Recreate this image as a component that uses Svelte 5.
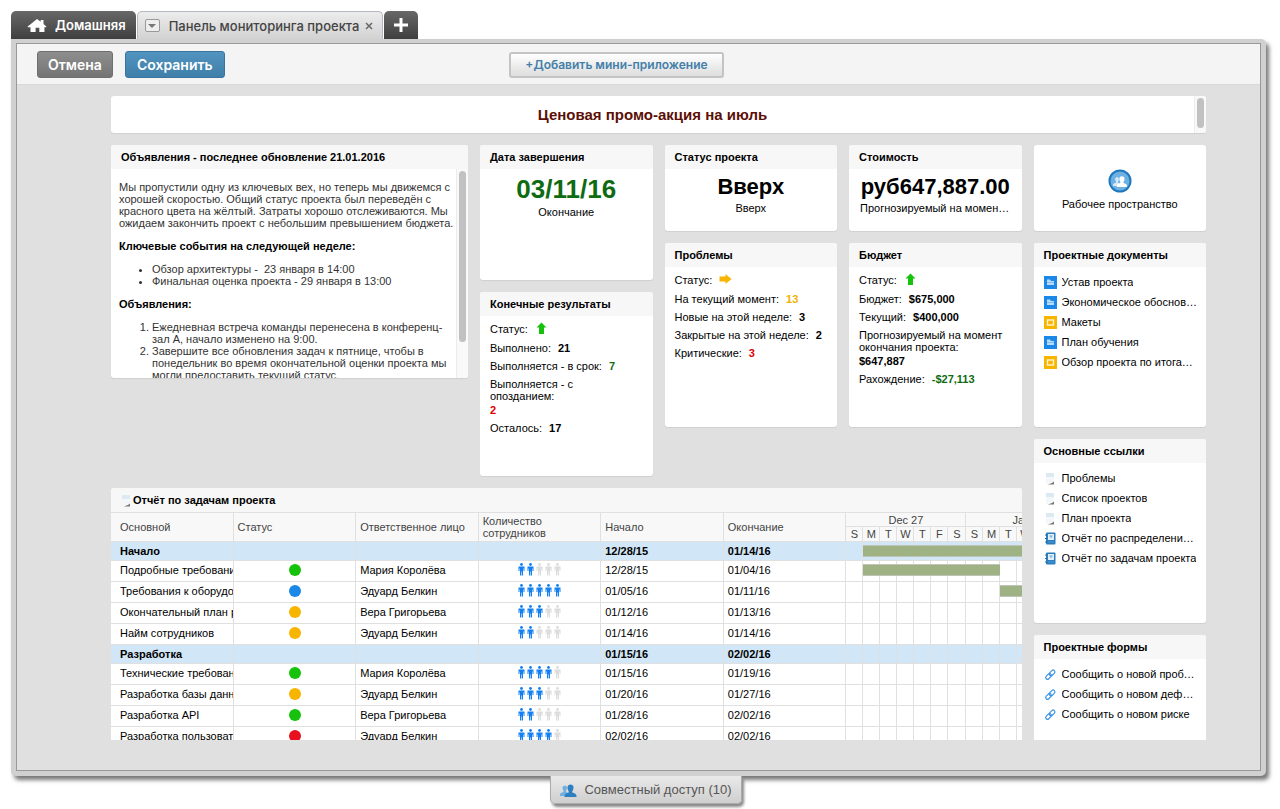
<script lang="ts">
	type Stat = { label: string; value?: string; arrow?: 'up' | 'right'; tone?: string };
	type Item = { icon: string; text: string };

	const results: Stat[] = [
		{ label: 'Статус:', arrow: 'up' },
		{ label: 'Выполнено:', value: '21' },
		{ label: 'Выполняется - в срок:', value: '7', tone: 'good' },
		{ label: 'Выполняется - с опозданием:', value: '2', tone: 'bad' },
		{ label: 'Осталось:', value: '17' }
	];

	const issues: Stat[] = [
		{ label: 'Статус:', arrow: 'right' },
		{ label: 'На текущий момент:', value: '13', tone: 'warn' },
		{ label: 'Новые на этой неделе:', value: '3' },
		{ label: 'Закрытые на этой неделе:', value: '2' },
		{ label: 'Критические:', value: '3', tone: 'bad' }
	];

	const budget: Stat[] = [
		{ label: 'Статус:', arrow: 'up' },
		{ label: 'Бюджет:', value: '$675,000' },
		{ label: 'Текущий:', value: '$400,000' },
		{ label: 'Прогнозируемый на момент окончания проекта:', value: '$647,887' },
		{ label: 'Рахождение:', value: '-$27,113', tone: 'good' }
	];

	const documents: Item[] = [
		{ icon: 'folder', text: 'Устав проекта' },
		{ icon: 'folder', text: 'Экономическое обоснование' },
		{ icon: 'slides', text: 'Макеты' },
		{ icon: 'folder', text: 'План обучения' },
		{ icon: 'slides', text: 'Обзор проекта по итогам года' }
	];

	const links: Item[] = [
		{ icon: 'sheet', text: 'Проблемы' },
		{ icon: 'sheet', text: 'Список проектов' },
		{ icon: 'sheet', text: 'План проекта' },
		{ icon: 'report', text: 'Отчёт по распределению ресурсов' },
		{ icon: 'report', text: 'Отчёт по задачам проекта' }
	];

	const forms: Item[] = [
		{ icon: 'chain', text: 'Сообщить о новой проблеме' },
		{ icon: 'chain', text: 'Сообщить о новом дефекте' },
		{ icon: 'chain', text: 'Сообщить о новом риске' }
	];

	const columns = ['Основной', 'Статус', 'Ответственное лицо', 'Количество сотрудников', 'Начало', 'Окончание'];
	const weeks = ['Dec 27', 'Jan 3'];
	const days = [...'SMTWTFSSMTWTFS'];

	// bar: first and last day column covered in the chart
	const tasks = [
		{ name: 'Начало', group: true, start: '12/28/15', end: '01/14/16', bar: [1, 13] },
		{ name: 'Подробные требования', status: 'green', owner: 'Мария Королёва', staff: 2, start: '12/28/15', end: '01/04/16', bar: [1, 8] },
		{ name: 'Требования к оборудованию', status: 'blue', owner: 'Эдуард Белкин', staff: 5, start: '01/05/16', end: '01/11/16', bar: [9, 13] },
		{ name: 'Окончательный план ресурсов', status: 'yellow', owner: 'Вера Григорьева', staff: 3, start: '01/12/16', end: '01/13/16' },
		{ name: 'Найм сотрудников', status: 'yellow', owner: 'Эдуард Белкин', staff: 2, start: '01/14/16', end: '01/14/16' },
		{ name: 'Разработка', group: true, start: '01/15/16', end: '02/02/16' },
		{ name: 'Технические требования', status: 'green', owner: 'Мария Королёва', staff: 4, start: '01/15/16', end: '01/19/16' },
		{ name: 'Разработка базы данных', status: 'yellow', owner: 'Эдуард Белкин', staff: 3, start: '01/20/16', end: '01/27/16' },
		{ name: 'Разработка API', status: 'green', owner: 'Вера Григорьева', staff: 2, start: '01/28/16', end: '02/02/16' },
		{ name: 'Разработка пользовательского', status: 'red', owner: 'Эдуард Белкин', staff: 4, start: '02/02/16', end: '02/02/16' }
	];

	function inBar(bar: number[] | undefined, day: number): boolean {
		return !!bar && day >= bar[0] && day <= bar[1];
	}
</script>

{#snippet icon(name: string)}
	{#if name === 'folder'}
		<svg width="13" height="13" viewBox="0 0 13 13" aria-hidden="true">
			<rect width="13" height="13" fill="#1b87e6" />
			<path d="M3 3.500h3l1 1.500h3v4H3z" fill="#b9dcfb" />
			<path d="M3 6.500h7" stroke="#5aaaf0" stroke-width=".6" />
		</svg>
	{:else if name === 'slides'}
		<svg width="13" height="13" viewBox="0 0 13 13" aria-hidden="true">
			<rect width="13" height="13" fill="#f7b500" />
			<rect x="3.500" y="4" width="6" height="5" fill="none" stroke="#fff4cf" stroke-width="1.400" />
		</svg>
	{:else if name === 'sheet'}
		<svg width="13" height="13" viewBox="0 0 13 13" aria-hidden="true">
			<path d="M2 1h8v8.500L3 12H2z" fill="#f4f7f9" />
			<path d="M2 1h8v4H2z" fill="#dbe9f0" />
			<path d="M3.500 12.500H10V9.500C8.500 11 6 11.800 3.500 12.500z" fill="#777" />
		</svg>
	{:else if name === 'report'}
		<svg width="13" height="13" viewBox="0 0 13 13" aria-hidden="true">
			<rect x="2" y=".5" width="9.500" height="12" rx="1" fill="#2b7fc0" />
			<rect x="4" y="2" width="6" height="6" fill="#e3f0fa" />
			<path d="M5.500 4h3M7 4v2" stroke="#6fa9d6" />
			<path d="M1 3h2M1 6.500h2M1 10h2" stroke="#2b6ea5" />
			<path d="M4 10h6" stroke="#4c9bd3" />
		</svg>
	{:else}
		<svg width="13" height="13" viewBox="0 0 13 13" aria-hidden="true">
			<g fill="none" stroke="#3d95e6" stroke-width="1.200" transform="rotate(-45 6.500 6.500)">
				<rect x="0.500" y="4.700" width="6.500" height="3.600" rx="1.800" />
				<rect x="5.500" y="4.700" width="6.500" height="3.600" rx="1.800" />
			</g>
		</svg>
	{/if}
{/snippet}

{#snippet arrow(dir: string)}
	{#if dir === 'up'}
		<svg width="13" height="13" viewBox="0 0 13 13" role="img" aria-label="Вверх">
			<path d="M6.500.5L11.500 5.500H9V12H4V5.500H1.500z" fill="#16c20b" />
		</svg>
	{:else}
		<svg width="13" height="13" viewBox="0 0 13 13" role="img" aria-label="Без изменений">
			<path d="M.5 3.500h6V1l6 5-6 5V8.500h-6z" fill="#f7b500" />
		</svg>
	{/if}
{/snippet}

{#snippet people(front: string, back: string)}
	<path d="M2.500 4.500C2.500 2 7 2 7 4.500 7 6 6.500 7 6 7.500V9l2 1v3H0v-1.500C0 10 1.500 9.500 3.500 9V7.500C3 7 2.500 6 2.500 4.500z" fill={back} />
	<path d="M7.500 4c0-3.500 6-3.500 6 0 0 2-.5 3.500-1.200 4.200V9.500c2.200.8 4.200 1.500 4.200 3.500v1h-12v-1c0-2 2-2.700 4.200-3.500V8.200C8 7.500 7.500 6 7.500 4z" fill={front} />
{/snippet}

{#snippet stats(rows: Stat[])}
	<dl class="stats">
		{#each rows as row}
			<div class="stat" class:status={row.arrow}>
				<dt>{row.label}</dt>
				<dd class={row.tone}>
					{#if row.arrow}{@render arrow(row.arrow)}{:else}{row.value}{/if}
				</dd>
			</div>
		{/each}
	</dl>
{/snippet}

{#snippet shortcuts(items: Item[])}
	<ul class="shortcuts">
		{#each items as item}
			<li>
				{@render icon(item.icon)}
				<a href="#open">{item.text}</a>
			</li>
		{/each}
	</ul>
{/snippet}

<div class="page">
	<nav class="tabs">
		<a class="tab home" href="#home">
			<svg width="20" height="13" viewBox="0 0 20 14" aria-hidden="true">
				<path d="M10 0l4 3V1h3v4.500L20 8v1h-2v5h-5.500V9.500h-4V14H3V9H0V8z" fill="#fff" />
			</svg>
			Домашняя
		</a>
		<div class="tab active">
			<button class="menu" aria-label="Меню вкладки"></button>
			<span>Панель мониторинга проекта</span>
			<button class="close" aria-label="Закрыть">
				<svg width="8" height="8" viewBox="0 0 8 8"><path d="M1 1l6 6M7 1L1 7" stroke="#666" stroke-width="1.500" /></svg>
			</button>
		</div>
		<button class="tab add" aria-label="Новая вкладка">
			<svg width="14" height="14" viewBox="0 0 14 14"><path d="M7 0v14M0 7h14" stroke="#fff" stroke-width="3" /></svg>
		</button>
	</nav>

	<div class="frame">
		<div class="window">
			<div class="toolbar">
				<div class="actions">
					<button class="btn cancel">Отмена</button>
					<button class="btn save">Сохранить</button>
				</div>
				<button class="btn widget">+Добавить мини-приложение</button>
			</div>

			<main class="board">
				<section class="card banner">
					<h1>Ценовая промо-акция на июль</h1>
					<div class="track"><div class="thumb"></div></div>
				</section>

				<section class="card news">
					<h2>Объявления - последнее обновление 21.01.2016</h2>
					<div class="scroller">
						<div class="article">
							<p>Мы пропустили одну из ключевых вех, но теперь мы движемся с хорошей скоростью. Общий статус проекта был переведён с красного цвета на жёлтый. Затраты хорошо отслеживаются. Мы ожидаем закончить проект с небольшим превышением бюджета.</p>
							<h3>Ключевые события на следующей неделе:</h3>
							<ul>
								<li>Обзор архитектуры -&nbsp; 23 января в 14:00</li>
								<li>Финальная оценка проекта - 29 января в 13:00</li>
							</ul>
							<h3>Объявления:</h3>
							<ol>
								<li>Ежедневная встреча команды перенесена в конференц-зал A, начало изменено на 9:00.</li>
								<li>Завершите все обновления задач к пятнице, чтобы в понедельник во время окончательной оценки проекта мы могли предоставить текущий статус.</li>
							</ol>
						</div>
						<div class="track"><div class="thumb"></div></div>
					</div>
				</section>

				<section class="card due">
					<h2>Дата завершения</h2>
					<div class="metric date">
						<strong>03/11/16</strong>
						<span>Окончание</span>
					</div>
				</section>

				<section class="card state">
					<h2>Статус проекта</h2>
					<div class="metric">
						<strong>Вверх</strong>
						<span>Вверх</span>
					</div>
				</section>

				<section class="card cost">
					<h2>Стоимость</h2>
					<div class="metric">
						<strong>руб647,887.00</strong>
						<span>Прогнозируемый на момент окончания</span>
					</div>
				</section>

				<a class="card workspace" href="#workspace">
					<svg width="24" height="24" viewBox="0 0 24 24" aria-hidden="true">
						<circle cx="12" cy="12" r="10.500" fill="#6db0e2" stroke="#1d78bd" stroke-width="2" />
						<g transform="translate(5 6) scale(.85)">{@render people('#fff', '#d3e8f8')}</g>
					</svg>
					Рабочее пространство
				</a>

				<section class="card results">
					<h2>Конечные результаты</h2>
					{@render stats(results)}
				</section>

				<section class="card issues">
					<h2>Проблемы</h2>
					{@render stats(issues)}
				</section>

				<section class="card budget">
					<h2>Бюджет</h2>
					{@render stats(budget)}
				</section>

				<section class="card documents">
					<h2>Проектные документы</h2>
					{@render shortcuts(documents)}
				</section>

				<section class="card links">
					<h2>Основные ссылки</h2>
					{@render shortcuts(links)}
				</section>

				<section class="card forms">
					<h2>Проектные формы</h2>
					{@render shortcuts(forms)}
				</section>

				<section class="card report">
					<h2>{@render icon('sheet')}Отчёт по задачам проекта</h2>
					<table>
						<colgroup>
							{#each columns as _}<col />{/each}
							{#each days as _, d}<col class={d % 7 === 6 ? 'day last' : 'day'} />{/each}
						</colgroup>
						<thead>
							<tr>
								{#each columns as column}<th rowspan="2">{column}</th>{/each}
								{#each weeks as week}<th class="week" colspan="7">{week}</th>{/each}
							</tr>
							<tr>
								{#each days as day}<th class="day">{day}</th>{/each}
							</tr>
						</thead>
						<tbody>
							{#each tasks as task}
								<tr class:group={task.group}>
									<td>{task.name}</td>
									<td class="center">
										{#if task.status}<span class="dot {task.status}"></span>{/if}
									</td>
									<td>{task.owner ?? ''}</td>
									<td class="center">
										{#if task.staff}
											<svg width="44" height="13" viewBox="0 0 44 13" role="img" aria-label="{task.staff} из 5">
												{#each [0, 1, 2, 3, 4] as n}
													<g transform="translate({n * 9} 0)" fill={n < task.staff ? '#1280f0' : '#dcdcdc'}>
														<circle cx="3.500" cy="1.500" r="1.400" />
														<path d="M.5 3.500h6V8H5.500V5.500H5V12.500H3.800V8.500H3.200V12.500H2V5.500H1.500V8H.5z" />
													</g>
												{/each}
											</svg>
										{/if}
									</td>
									<td>{task.start}</td>
									<td>{task.end}</td>
									{#each days as _, d}<td class="day" class:filled={inBar(task.bar, d)}></td>{/each}
								</tr>
							{/each}
						</tbody>
					</table>
				</section>
			</main>
		</div>
	</div>

	<div class="footer">
		<button class="share">
			<svg width="17" height="14" viewBox="0 0 17 14" aria-hidden="true">{@render people('#2d7fc1', '#6fb0e0')}</svg>
			Совместный доступ (10)
		</button>
	</div>
</div>

<style>
	:global(body) {
		background: #fff;
		font-family: 'Liberation Sans', Arial, sans-serif;
		font-size: 11px;
		line-height: 12px;
		color: #000;
	}

	.page {
		padding: 11px 14px 0 11px;
	}

	h1, h2, h3, p, ul, ol, dl, dd {
		margin: 0;
		padding: 0;
	}

	button {
		font: inherit;
		cursor: pointer;
	}

	a {
		color: inherit;
		text-decoration: none;
	}

	svg {
		flex: none;
		display: block;
	}

	/* Tabs */
	.tabs {
		display: flex;
		align-items: flex-end;
		gap: 1px;
		font-family: Inter, sans-serif;
		font-size: 13px;
		font-weight: 500;
	}

	.tab {
		box-sizing: border-box;
		display: flex;
		align-items: center;
		height: 28px;
		border: 0;
		border-radius: 5px 5px 0 0;
		background: linear-gradient(#686868, #3f3f3f);
		color: #fff;
	}

	.home {
		gap: 8px;
		padding: 0 10px 0 16px;
		font-weight: 600;
	}

	.active {
		gap: 6px;
		padding: 0 9px 0 7px;
		background: linear-gradient(#ececec, #d2d2d2);
		border: 1px solid #b4b8c0;
		border-bottom: 0;
		color: #444;
	}

	.active span {
		padding-left: 3px;
	}

	.menu {
		display: flex;
		align-items: center;
		justify-content: center;
		width: 15px;
		height: 13px;
		padding: 0;
		border: 1px solid #999;
		border-radius: 2px;
		background: #eee;
	}

	.menu::before {
		content: '';
		border: 4px solid transparent;
		border-top-color: #777;
		border-bottom: 0;
	}

	.close {
		padding: 0;
		border: 0;
		background: none;
	}

	.add {
		padding: 0 10px;
	}

	/* Window */
	.frame {
		padding: 4px 5px 5px;
		background: #d0d0d0;
		border-radius: 0 5px 5px 5px;
		box-shadow: 3px 4px 4px #777;
	}

	.window {
		border: 1px solid #999;
		background: #e0e0e0;
	}

	.toolbar {
		display: grid;
		grid-template-columns: 1fr auto 1fr;
		align-items: center;
		padding: 7px 64px 6px 20px;
		background: #f4f4f4;
		border-bottom: 1px solid #d8d8d8;
		font-family: Inter, sans-serif;
	}

	.actions {
		display: flex;
		gap: 12px;
	}

	.btn {
		box-sizing: border-box;
		height: 27px;
		padding: 0 11px;
		border: 1px solid #6f6f6f;
		border-radius: 3px;
		color: #fff;
		font-size: 14px;
		font-weight: 600;
		white-space: nowrap;
	}

	.cancel {
		padding: 0 10px;
		background: linear-gradient(#8e8e8e, #747474);
	}

	.save {
		border-color: #3a749e;
		background: linear-gradient(#5194bf, #3f7faa);
	}

	.widget {
		height: 26px;
		padding: 0 14px;
		border: 2px solid #c4c4c4;
		background: linear-gradient(#fff, #ddd);
		color: #447fa9;
		font-size: 12px;
	}

	/* Dashboard grid */
	.board {
		display: grid;
		grid-template-columns: repeat(6, minmax(0, 1fr));
		grid-template-rows: repeat(13, 37px) 7px;
		gap: 12px;
		padding: 11px 54px 30px 94px;
	}

	.card {
		min-width: 0;
		background: #fff;
		border-radius: 3px;
		box-shadow: 0 1px 1px #d0d0d0;
		overflow: hidden;
	}

	.banner { grid-area: 1 / 1 / 2 / 7; }
	.news { grid-area: 2 / 1 / 7 / 3; }
	.due { grid-area: 2 / 3 / 5 / 4; }
	.state { grid-area: 2 / 4 / 4 / 5; }
	.cost { grid-area: 2 / 5 / 4 / 6; }
	.workspace { grid-area: 2 / 6 / 4 / 7; }
	.results { grid-area: 5 / 3 / 9 / 4; }
	.issues { grid-area: 4 / 4 / 8 / 5; }
	.budget { grid-area: 4 / 5 / 8 / 6; }
	.documents { grid-area: 4 / 6 / 8 / 7; }
	.links { grid-area: 8 / 6 / 12 / 7; }
	.forms { grid-area: 12 / 6 / 15 / 7; }
	.report { grid-area: 9 / 1 / 15 / 6; }

	.forms,
	.report {
		border-radius: 3px 3px 0 0;
		box-shadow: none;
	}

	h2 {
		display: flex;
		align-items: center;
		height: 24px;
		padding: 0 10px;
		background: #f7f7f7;
		font-size: 11px;
	}

	.report h2 {
		padding: 0 9px;
	}

	.banner {
		display: flex;
	}

	h1 {
		flex: 1;
		color: #5c0f06;
		font-size: 15px;
		line-height: 38px;
		text-align: center;
	}

	.track {
		flex: none;
		padding: 2px;
		background: #f9f9f9;
		border-left: 1px solid #ececec;
	}

	.thumb {
		width: 7px;
		height: 30px;
		border-radius: 4px;
		background: #c1c1c1;
	}

	.news {
		display: flex;
		flex-direction: column;
	}

	.news h2 {
		flex: none;
	}

	.scroller {
		display: flex;
		flex: 1;
		min-height: 0;
	}

	.scroller .thumb {
		height: 171px;
	}

	.article {
		flex: 1;
		display: flex;
		flex-direction: column;
		gap: 11px;
		padding: 12px 0 0 8px;
		color: #333;
	}

	.article h3 {
		color: #000;
		font-size: 11px;
	}

	.article ul,
	.article ol {
		padding: 0 8px 0 33px;
	}

	/* Metrics */
	.metric {
		display: flex;
		flex-direction: column;
		gap: 4px;
		padding: 7px 11px;
		text-align: center;
	}

	.metric strong {
		font-size: 22px;
		line-height: 22px;
		white-space: nowrap;
	}

	.metric span {
		overflow: hidden;
		text-overflow: ellipsis;
		white-space: nowrap;
	}

	.date strong {
		color: #0f6b12;
		font-size: 26px;
		line-height: 26px;
	}

	.workspace {
		display: flex;
		flex-direction: column;
		align-items: center;
		justify-content: center;
		gap: 5px;
		padding-top: 2px;
	}

	.stats {
		display: flex;
		flex-direction: column;
		gap: 6px;
		padding: 6px 8px 6px 10px;
	}

	.stat {
		display: flex;
		flex-wrap: wrap;
		gap: 2px 7px;
	}

	.status {
		line-height: 14px;
	}

	.stat dt {
		max-width: 94%;
	}

	.stat dd {
		font-weight: bold;
	}

	.good { color: #0f6b12; }
	.warn { color: #f2b100; }
	.bad { color: #e00000; }

	.shortcuts {
		padding: 5px 8px 5px 10px;
		list-style: none;
	}

	.shortcuts li {
		display: flex;
		align-items: center;
		gap: 5px;
		height: 20px;
	}

	.shortcuts a {
		overflow: hidden;
		text-overflow: ellipsis;
		white-space: nowrap;
	}

	/* Task report */
	table {
		width: calc(100% + 65px);
		table-layout: fixed;
		border-collapse: separate;
		border-spacing: 0;
	}

	col.day {
		width: 17px;
	}

	col.last {
		width: 18px;
	}

	th,
	td {
		box-sizing: border-box;
		padding: 0 3px 0 4px;
		border-right: 1px solid #e0e0e0;
		border-bottom: 1px solid #e0e0e0;
		overflow: hidden;
		text-align: left;
	}

	th {
		height: 15px;
		border-top: 1px solid #e0e0e0;
		background: #f8f8f8;
		color: #444;
		font-weight: normal;
	}

	th:first-child:not(.day),
	td:first-child {
		padding-left: 9px;
	}

	th.week,
	th.day {
		padding: 0;
		text-align: center;
	}

	th.day {
		border-top: 0;
	}

	td {
		height: 21px;
		padding-bottom: 3px;
		white-space: nowrap;
	}

	td.center > * {
		margin: 0 auto;
	}

	td.day {
		position: relative;
		padding: 0;
		overflow: visible;
	}

	.filled::after {
		content: '';
		position: absolute;
		inset: 3px -1px auto 0;
		height: 10px;
		background: #9fb284;
		border: solid #bfc4b8;
		border-width: 1px 0;
	}

	.group td {
		height: 19px;
		padding-bottom: 0;
		background: #d1e6f6;
		font-weight: bold;
	}

	.dot {
		display: block;
		width: 12px;
		height: 12px;
		border-radius: 50%;
	}

	.green { background: #16c20b; }
	.blue { background: #1b87e6; }
	.yellow { background: #f7b500; }
	.red { background: #e8101e; }

	/* Share tab */
	.footer {
		display: flex;
		justify-content: center;
		padding: 0 0 5px 15px;
	}

	.share {
		position: relative;
		display: flex;
		align-items: center;
		gap: 7px;
		height: 28px;
		padding: 0 9px;
		border: 1px solid #aaa;
		border-top: 0;
		border-radius: 0 0 5px 5px;
		background: linear-gradient(#e9e9e9, #cfcfcf);
		box-shadow: 2px 3px 3px #888;
		color: #555;
		font-size: 13px;
	}
</style>
